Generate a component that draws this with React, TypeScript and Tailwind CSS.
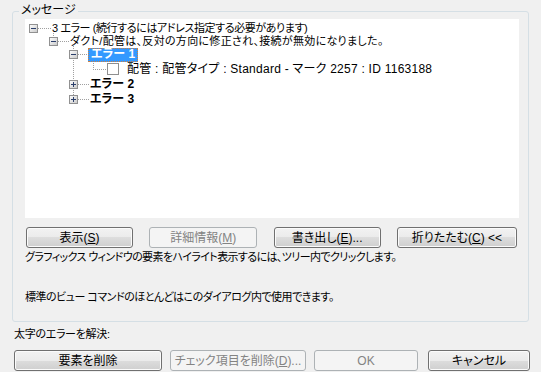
import React from "react";

const FONT = "font-['Liberation_Sans','Noto_Sans_CJK_JP',sans-serif] [font-feature-settings:'palt']";

const Btn = ({
  w,
  disabled,
  children,
}: {
  w: string;
  disabled?: boolean;
  children: React.ReactNode;
}) => (
  <button
    type="button"
    disabled={disabled}
    className={
      disabled
        ? `${w} h-[21px] rounded-[3px] border border-[#adb2b5] bg-[#f4f4f4] text-[12px] leading-[14px] text-[#838383] flex items-center justify-center whitespace-nowrap`
        : `${w} h-[21px] rounded-[3px] border border-[#707070] bg-[linear-gradient(#f2f2f2,#ebebeb_50%,#dddddd_50%,#cfcfcf)] shadow-[inset_0_0_0_1px_#fbfbfb] text-[12px] leading-[14px] text-black flex items-center justify-center whitespace-nowrap`
    }
  >
    {children}
  </button>
);

const Expander = ({ x, y, open }: { x: number; y: number; open: boolean }) => (
  <g>
    <rect x={x + 0.5} y={y + 0.5} width={8} height={8} fill="url(#exp)" stroke="#919191" />
    <line x1={x + 2} y1={y + 4.5} x2={x + 7} y2={y + 4.5} stroke="#2b3f6b" />
    {!open && <line x1={x + 4.5} y1={y + 2} x2={x + 4.5} y2={y + 7} stroke="#2b3f6b" />}
  </g>
);

// connector lines drawn in tree-panel coordinates
const TreeLines = () => (
  <svg className="absolute left-0 top-0" width={494} height={199}>
    <defs>
      <linearGradient id="exp" x1="0" y1="0" x2="1" y2="1">
        <stop offset="0" stopColor="#ffffff" />
        <stop offset="1" stopColor="#c8c8c8" />
      </linearGradient>
    </defs>
    <g stroke="#a0a0a0" strokeDasharray="1 1" shapeRendering="crispEdges">
      <line x1={13} y1={9.5} x2={26} y2={9.5} />
      <line x1={28.5} y1={14} x2={28.5} y2={18} />
      <line x1={33} y1={22.5} x2={44} y2={22.5} />
      <line x1={48.5} y1={27} x2={48.5} y2={80} />
      <line x1={53} y1={35.5} x2={63} y2={35.5} />
      <line x1={68.5} y1={42} x2={68.5} y2={50} />
      <line x1={68} y1={50.5} x2={82} y2={50.5} />
      <line x1={53} y1={65.5} x2={64} y2={65.5} />
      <line x1={53} y1={80.5} x2={64} y2={80.5} />
    </g>
    <Expander x={4} y={5} open />
    <Expander x={24} y={18} open />
    <Expander x={44} y={31} open />
    <rect x={82.5} y={44.5} width={11} height={11} fill="#fff" stroke="#8f8f8f" />
    <Expander x={44} y={61} open={false} />
    <Expander x={44} y={76} open={false} />
  </svg>
);

const U = ({ children }: { children: React.ReactNode }) => (
  <span className="underline underline-offset-1">{children}</span>
);

export default function App() {
  return (
    <div className={`w-[541px] h-[372px] bg-[#f0f0f0] text-black overflow-hidden pt-[11px] ${FONT}`}>
      <div className="relative ml-[12px] w-[517px] h-[311px] rounded-[3px] border border-[#d5dfe5] pt-[7px] pl-[12px]">
        <span className="absolute left-[6px] top-[-9px] bg-[#f0f0f0] px-[2px] text-[12px] leading-[14px]">
          メッセージ
        </span>

        <div className="relative w-[494px] h-[199px] bg-white pt-[3px] text-[11px] leading-[13px] whitespace-nowrap">
          <TreeLines />
          <div className="relative">
            <div className="h-[13px] flex items-center pl-[27px] tracking-[-0.4px]">
              3 エラー (続行するにはアドレス指定する必要があります)
            </div>
            <div className="h-[13px] flex items-center pl-[45px] tracking-[0.3px]">
              ダクト/配管は、反対の方向に修正され、接続が無効になりました。
            </div>
            <div className="h-[13px] flex items-center pl-[63px]">
              <span className="h-[14px] bg-[#3399ff] border border-dotted border-[#d08040] text-white font-bold text-[12px] flex items-center pl-[2px] pr-[2px]">
                エラー 1
              </span>
            </div>
            <div className="h-[16px] flex items-center pl-[102px] text-[12px] tracking-[0.25px]">
              配管 : 配管タイプ : Standard - マーク 2257 : ID 1163188
            </div>
            <div className="h-[15px] flex items-center pl-[65px] font-bold text-[12px]">エラー 2</div>
            <div className="h-[14px] flex items-center pl-[65px] font-bold text-[12px]">エラー 3</div>
          </div>
        </div>

        <div className="mt-[9px] ml-[1px] w-[491px] flex justify-between">
          <Btn w="w-[107px]">
            表示(<U>S</U>)
          </Btn>
          <Btn w="w-[108px]" disabled>
            詳細情報(<U>M</U>)
          </Btn>
          <Btn w="w-[107px]">
            書き出し(<U>E</U>)...
          </Btn>
          <Btn w="w-[120px]">
            折りたたむ(<U>C</U>) &lt;&lt;
          </Btn>
        </div>

        <p className="mt-[2px] text-[11px] leading-[14px] tracking-[-0.6px]">
          グラフィックス ウィンドウの要素をハイライト表示するには、ツリー内でクリックします。
        </p>
        <p className="mt-[26px] text-[11px] leading-[14px] tracking-[-0.5px]">
          標準のビュー コマンドのほとんどはこのダイアログ内で使用できます。
        </p>
      </div>

      <p className="ml-[14px] mt-[5px] text-[11px] leading-[14px] tracking-[-0.3px]">太字のエラーを解決:</p>

      <div className="ml-[14px] mt-[9px] flex">
        <Btn w="w-[148px]">要素を削除</Btn>
        <div className="w-[8px]" />
        <Btn w="w-[136px]" disabled>
          チェック項目を削除(<U>D</U>)...
        </Btn>
        <div className="w-[8px]" />
        <Btn w="w-[104px]" disabled>
          OK
        </Btn>
        <div className="w-[10px]" />
        <Btn w="w-[102px]">キャンセル</Btn>
      </div>
    </div>
  );
}
